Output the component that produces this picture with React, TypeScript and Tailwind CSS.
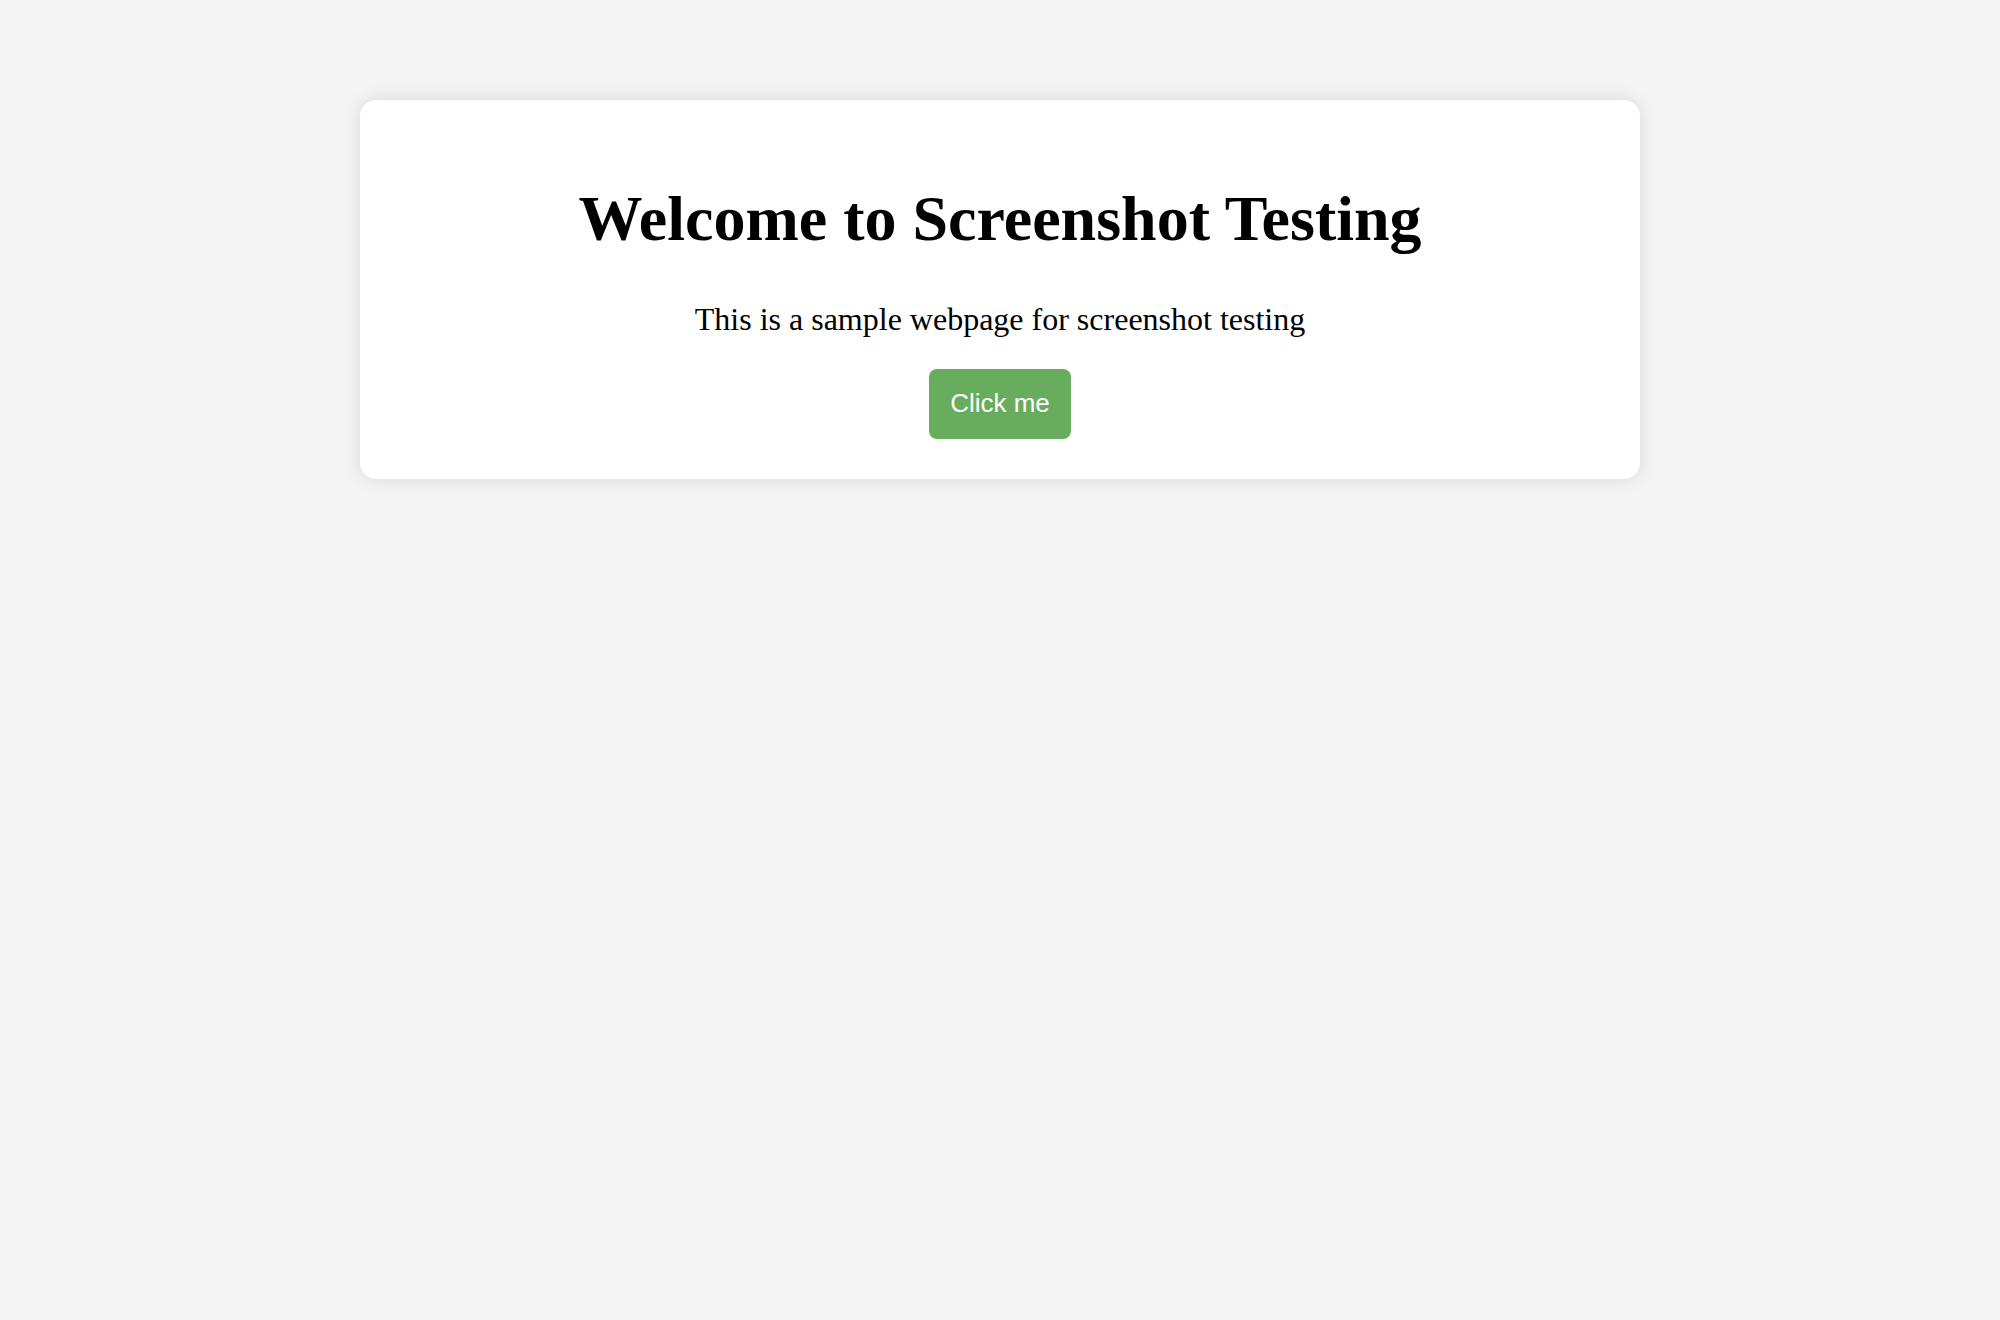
export default function App() {
  return (
    <div className="min-h-screen bg-[#f4f4f4] pt-[100px]">
      <div className="mx-auto w-[1280px] rounded-[16px] bg-white px-8 pt-[82px] pb-[40px] text-center shadow-[0_0_18px_rgba(0,0,0,0.12)]">
        <h1 className="m-0 text-[64px] font-bold leading-[1.15] text-black [font-family:'Liberation_Serif',serif]">
          Welcome to Screenshot Testing
        </h1>
        <p className="mt-[45px] text-[32px] leading-[1.15] text-black [font-family:'Liberation_Serif',serif]">
          This is a sample webpage for screenshot testing
        </p>
        <button className="mt-[32px] rounded-[8px] bg-[#68ad5e] px-[21px] py-[20px] text-[26px] leading-[1.15] text-white [font-family:'Liberation_Sans',Arial,sans-serif]">
          Click me
        </button>
      </div>
    </div>
  );
}
